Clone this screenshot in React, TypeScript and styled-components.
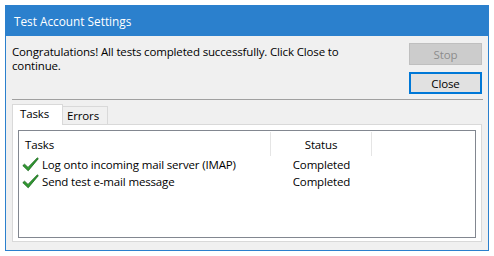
import { createGlobalStyle, styled } from 'styled-components';

const GlobalStyle = createGlobalStyle`
  html, body {
    margin: 0;
    padding: 0;
    background: #ffffff;
  }

  body {
    font-family: "Open Sans", "Noto Sans", "Liberation Sans", sans-serif;
    font-size: 11.5px;
    letter-spacing: -0.15px;
    color: #000;
  }
`;

const Page = styled.div`
  padding: 5px;
`;

const Window = styled.section`
  width: 484px;
  height: 246px;
  box-sizing: border-box;
  border: 1px solid #2b80cd;
  background: #f0f0f0;
  display: flex;
  flex-direction: column;
`;

const TitleBar = styled.header`
  height: 30px;
  flex: none;
  background: #2b80cd;
  color: #fff;
  display: flex;
  align-items: center;
  padding-left: 8px;
  font-size: 11.8px;
  letter-spacing: 0;
`;

const Body = styled.div`
  flex: 1;
  display: flex;
  flex-direction: column;
  padding: 7px 6px 0 6px;
`;

const TopRow = styled.div`
  display: flex;
  justify-content: space-between;
  align-items: flex-start;
`;

const Message = styled.p`
  margin: 2px 0 0;
  width: 340px;
  line-height: 14px;
`;

const ButtonColumn = styled.div`
  display: flex;
  flex-direction: column;
  gap: 7px;
`;

const Button = styled.button<{ $focused?: boolean }>`
  width: 73px;
  height: 22px;
  box-sizing: border-box;
  font: inherit;
  letter-spacing: inherit;
  padding: 0;
  border: ${p => (p.$focused ? '2px solid #0078d7' : '1px solid #bfbfbf')};
  background: ${p => (p.$focused ? '#e1e1e1' : '#cccccc')};
  color: ${p => (p.$focused ? '#000' : '#8c8c8c')};
`;

const Separator = styled.hr`
  margin: 5px -1px 0 0;
  border: 0;
  border-top: 1px solid #a0a0a0;
  height: 0;
`;

const TabStrip = styled.div`
  margin-top: 4px;
  height: 20px;
  display: flex;
  align-items: flex-end;
`;

const Tab = styled.div<{ $active?: boolean; $width: number }>`
  width: ${p => p.$width}px;
  height: ${p => (p.$active ? 21 : 18)}px;
  margin-bottom: ${p => (p.$active ? -1 : 0)}px;
  box-sizing: border-box;
  border: 1px solid #d9d9d9;
  border-bottom: none;
  border-left-width: ${p => (p.$active ? 1 : 0)}px;
  background: ${p => (p.$active ? '#fff' : '#f0f0f0')};
  position: relative;
  z-index: ${p => (p.$active ? 1 : 0)};
  display: flex;
  align-items: ${p => (p.$active ? 'flex-start' : 'center')};
  padding: ${p => (p.$active ? '1px 0 0 7px' : '0 0 0 4px')};
`;

const TabPanel = styled.div`
  height: 118px;
  box-sizing: border-box;
  border: 1px solid #d9d9d9;
  background: #fff;
  padding: 5px 5px 3px;
`;

const ListView = styled.div`
  height: 108px;
  box-sizing: border-box;
  border: 1px solid #828790;
  background: #fff;
`;

const HeaderRow = styled.div`
  display: flex;
  height: 25px;
`;

const HeaderCell = styled.div<{ $width: number; $center?: boolean }>`
  width: ${p => p.$width}px;
  box-sizing: border-box;
  border-right: 1px solid #e5e5e5;
  margin-top: 1px;
  display: flex;
  align-items: center;
  justify-content: ${p => (p.$center ? 'center' : 'flex-start')};
  padding-left: ${p => (p.$center ? 0 : 6)}px;
`;

const Row = styled.div`
  display: flex;
  height: 17px;
  align-items: center;
`;

const Cell = styled.div<{ $width: number; $center?: boolean }>`
  width: ${p => p.$width}px;
  display: flex;
  align-items: center;
  gap: 3px;
  justify-content: ${p => (p.$center ? 'center' : 'flex-start')};
  padding-left: ${p => (p.$center ? 0 : 3)}px;
  box-sizing: border-box;
  white-space: nowrap;
`;

function CheckIcon() {
  return (
    <svg width="17" height="15" viewBox="0 0 17 15">
      <path
        d="M0.8 8.6 L2.6 7.2 L6 10.4 L15.4 0.8 L16.3 1.7 L6.2 13.8 Z"
        fill="#2f9b2f"
        stroke="#17621a"
        strokeWidth="0.8"
        strokeLinejoin="round"
      />
    </svg>
  );
}

const tasks = [
  { name: 'Log onto incoming mail server (IMAP)', status: 'Completed' },
  { name: 'Send test e-mail message', status: 'Completed' },
];

function App() {
  return (
    <Page>
      <GlobalStyle />
      <Window>
        <TitleBar>Test Account Settings</TitleBar>
        <Body>
          <TopRow>
            <Message>
              Congratulations! All tests completed successfully. Click Close to continue.
            </Message>
            <ButtonColumn>
              <Button disabled>Stop</Button>
              <Button $focused>Close</Button>
            </ButtonColumn>
          </TopRow>
          <Separator />
          <TabStrip>
            <Tab $active $width={51}>Tasks</Tab>
            <Tab $width={45}>Errors</Tab>
          </TabStrip>
          <TabPanel>
            <ListView>
              <HeaderRow>
                <HeaderCell $width={252}>Tasks</HeaderCell>
                <HeaderCell $width={101} $center>Status</HeaderCell>
              </HeaderRow>
              {tasks.map(t => (
                <Row key={t.name}>
                  <Cell $width={252}>
                    <CheckIcon />
                    {t.name}
                  </Cell>
                  <Cell $width={101} $center>{t.status}</Cell>
                </Row>
              ))}
            </ListView>
          </TabPanel>
        </Body>
      </Window>
    </Page>
  );
}

export default App;
